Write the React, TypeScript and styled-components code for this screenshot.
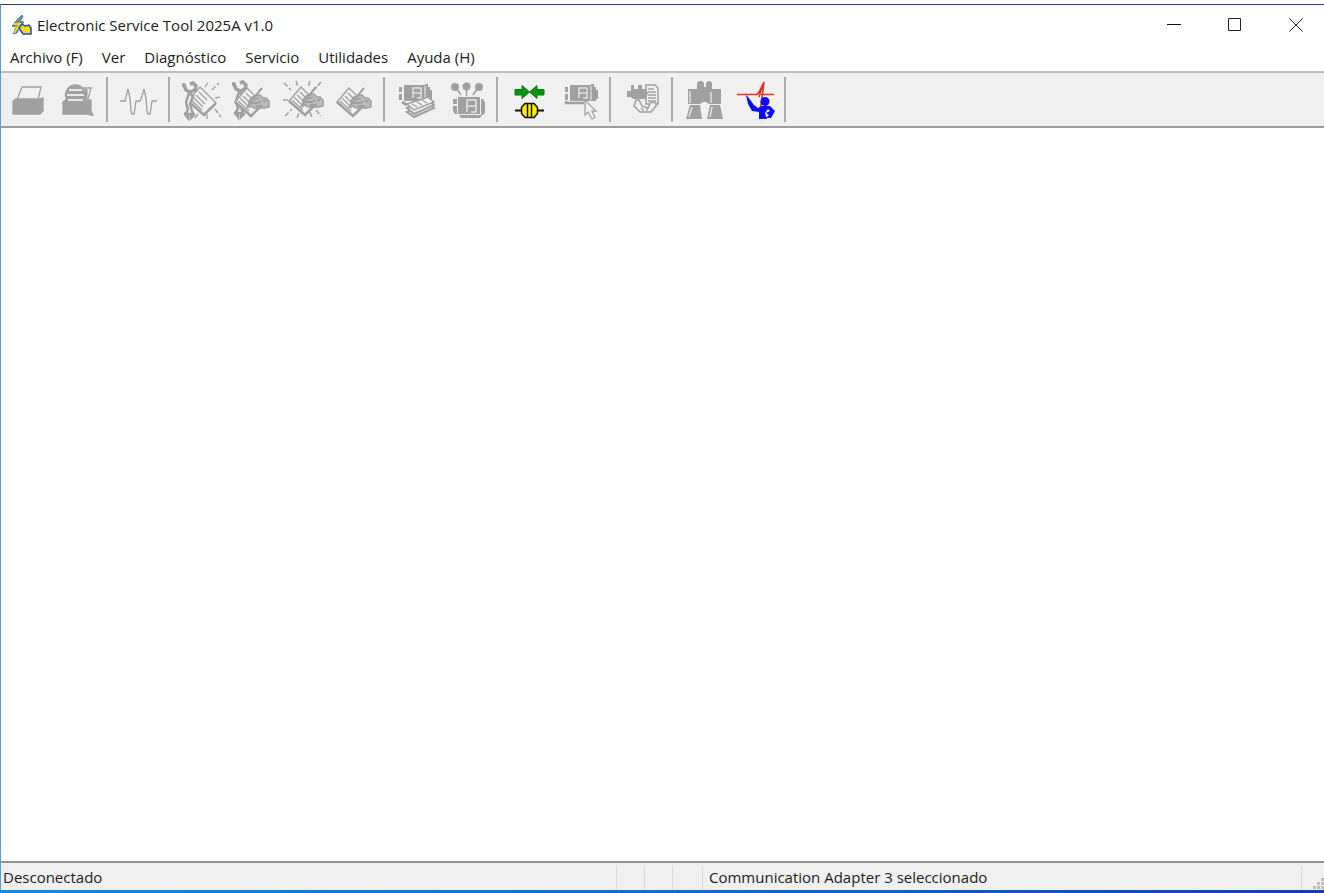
import React from 'react';
import styled, { createGlobalStyle } from 'styled-components';

const GlobalStyle = createGlobalStyle`
  * { box-sizing: border-box; }
  body { margin: 0; background: #fff; }
  button { font: inherit; color: inherit; border: 0; background: none; padding: 0; }
`;

const GRAY = '#a0a0a0';
const FACE = '#f0f0f0';

const Window = styled.div`
  display: flex;
  flex-direction: column;
  min-height: 100vh;
  padding-top: 4px;
  color: #1c1c1c;
  font-family: "Open Sans", "Noto Sans", sans-serif;
  font-size: 15px;
  line-height: 20px;
`;

const Frame = styled.div`
  flex: 1;
  display: flex;
  flex-direction: column;
  border-top: 1px solid #2b4068;
  border-left: 1px solid #5a9bd5;
`;

const TitleBar = styled.header`
  display: flex;
  align-items: center;
  height: 40px;
  padding-left: 10px;
`;

const Title = styled.h1`
  flex: 1;
  margin: 0 0 0 5px;
  font-size: 15px;
  font-weight: 400;
`;

const Captions = styled.div`
  display: flex;
  gap: 5px;
`;

const CaptionButton = styled.button`
  display: flex;
  align-items: center;
  justify-content: center;
  width: 56px;
  height: 40px;
`;

const MenuBar = styled.nav`
  display: flex;
  gap: 19px;
  height: 26px;
  padding: 2px 9px;
`;

const MenuButton = styled.button`
  height: 20px;
  white-space: nowrap;
`;

const ToolBar = styled.div`
  display: flex;
  align-items: center;
  height: 57px;
  padding-left: 1px;
  background: ${FACE};
  border-top: 2px solid #bdbdbd;
  border-bottom: 2px solid #9c9c9c;
`;

const ToolButton = styled.button`
  display: flex;
  align-items: center;
  justify-content: center;
  width: 51px;
  height: 53px;
  flex: none;
`;

const Separator = styled.span`
  flex: none;
  width: 2px;
  height: 45px;
  margin: 0 7px 0 2px;
  background: #acacac;
`;

const Workspace = styled.main`
  flex: 1;
  background: #fff;
`;

const StatusBar = styled.footer`
  display: grid;
  grid-template-columns: minmax(0, 615fr) 28px 28px 30px minmax(0, 599fr) 23px;
  height: 29px;
  padding: 3px 0 1px;
  background: ${FACE};
  border-top: 2px solid #929292;
`;

const Pane = styled.div`
  padding: 1px 2px;
  white-space: nowrap;
  overflow: hidden;
  & + & { border-left: 1px solid #d9d9d9; }
`;

const AdapterPane = styled(Pane)`
  padding-left: 6px;
`;

const GripPane = styled(Pane)`
  display: flex;
  align-items: flex-end;
  justify-content: flex-end;
  padding: 0;
`;

const Desktop = styled.div`
  height: 3px;
  background: linear-gradient(90deg, #1b86dc, #1562c4 65%, #0d3fae);
`;

const Glyph = ({ children }: { children: React.ReactNode }) => (
  <svg width="39" height="39" viewBox="0 0 39 39" fill="none" stroke={GRAY} strokeWidth="1.3" overflow="visible" aria-hidden="true">
    {children}
  </svg>
);

const Wrench = () => (
  <>
    <path strokeWidth="3.500" d="M-1 5H1L3 10 7 12 12 10 13 6 10 3 7 4" />
    <path fill={FACE} strokeWidth="2.500" d="M6 13 10 16 7 24 9 31 11 35 8 38 8 34H5L5 38 2 34 5 30 3 22z" />
  </>
);

const Sheet = () => (
  <>
    <path fill={FACE} d="M15 7 31 23 19 35 3 21z" />
    <path strokeWidth="2.500" d="M3 21 19 35 31 23" />
    <path d="M14 12 22 20M11 15 20 24M8 17 18 27M6 20 17 30" />
  </>
);

const WritingHand = () => (
  <>
    <path fill="#bababa" strokeWidth="1.500" d="M17 20 20 16 25 14H28L31 17H34L37 20V26L33 27H22L17 24z" />
    <path strokeWidth="2" d="M30 7 20 19 15 27" />
    <path stroke="#989898" d="M19 22H26L29 20M22 19 27 17M24 25H31M31 20H34" />
  </>
);

const Chip = () => (
  <>
    <path fill={GRAY} stroke="none" d="M8 5H29V4H32V7H34V10H36V19H34V21H8zM3 7H6V12H3zM3 14H6V20H3z" />
    <path stroke="#e0e0e0" strokeWidth="1.500" d="M25 8H17V18M17 13H25V8M21 18H25V13" />
    <path stroke="#dcdcdc" d="M29 6V20" />
  </>
);

const PrintIcon = () => (
  <Glyph>
    <path d="M9 20 14 7H33L30 20" />
    <path fill={GRAY} d="M5 21 8 19H32L35 18V31L32 34H5z" />
  </Glyph>
);

const PrintScreenIcon = () => (
  <Glyph>
    <path d="M23 8H32L29 19" />
    <path strokeWidth="3" d="M27 9v10" />
    <path fill={GRAY} d="M4 22 7 20H32V31l2 4H31L30 34H4z" />
    <circle cx="16.500" cy="15" r="10" fill={GRAY} />
    <path stroke="#e8e8e8" strokeWidth="2" d="M10 10H23M8 15H25M9 20H24" />
  </Glyph>
);

const WaveIcon = () => (
  <Glyph>
    <path d="M-1 21H4L5 17 7 9 9 18 10 31 11 34H13L14 28 15 21H19L21 16 23 9 25 18 26 31 27 34H29L30 28 31 21H36" />
  </Glyph>
);

const DiagnoseIcon = () => (
  <Glyph>
    <g transform="translate(2 0)">
      <Sheet />
    </g>
    <Wrench />
    <path strokeDasharray="5 2" d="M22 7l3-5M29 10l7-7M32 18l5-1M32 29l6 8M12 38l3-4M24 34v5" />
  </Glyph>
);

const DiagnoseWriteIcon = () => (
  <Glyph>
    <g transform="translate(-1 -1)">
      <Wrench />
    </g>
    <g transform="translate(-2 1)">
      <Sheet />
      <WritingHand />
    </g>
  </Glyph>
);

const NewNoteIcon = () => (
  <Glyph>
    <g transform="translate(1 0)">
      <Sheet />
      <WritingHand />
    </g>
    <path strokeWidth="1.500" strokeDasharray="5 2" d="M-1 3 6 10M11 1l2 6M25 1l-2 6M36 2 29 10M-2 20H3M0 36l7-7M12 38l2-5M25 32l2 6M31 30l5 6" />
  </Glyph>
);

const NoteIcon = () => (
  <Glyph>
    <g transform="translate(-2 1)">
      <Sheet />
      <WritingHand />
    </g>
  </Glyph>
);

const ChipPagesIcon = () => (
  <Glyph>
    <g transform="translate(-2 0)">
      <Chip />
    </g>
    <path strokeWidth="3" d="M4 22l5 3" />
    <path fill={FACE} strokeWidth="2" d="M9 32 31 24 36 28 16 37z" />
    <path fill={FACE} strokeWidth="2" d="M9 28 31 20 36 25 16 34z" />
    <path fill={FACE} strokeWidth="1.500" d="M9 24 30 17 36 22 16 30z" />
    <path d="M14 24l5 3M19 22l5 3M24 20l5 3" />
  </Glyph>
);

const ChipProbesIcon = () => (
  <Glyph>
    <path strokeWidth="1.500" d="M7 8l5 7M17.500 7v9M29 8l-5 7" />
    <g fill={GRAY} stroke="none">
      <circle cx="6" cy="7" r="4" />
      <circle cx="17.500" cy="6.500" r="4" />
      <circle cx="30" cy="7" r="4" />
      <path d="M9 17H31V34H9zM10 35H33L31 38H12zM32 19h2l2 3V33l-2 2h-2zM4 19H8V24H4zM4 26H8V34H6L4 31z" />
    </g>
    <path stroke="#e4e4e4" strokeWidth="1.500" d="M27 20H18V32M18 26H27V20M22 32H27V26" />
  </Glyph>
);

const ConnectIcon = () => (
  <Glyph>
    <path fill="#0a9414" stroke="#0a7a10" strokeWidth="1" d="M4 9.500h7V5.500l7.500 6.500-7.500 6.500V15H4zM33 9.500H26V5.500L18.500 12 26 18.500V15h7z" />
    <path stroke="#111" strokeWidth="2" d="M4 30.500H11M26 30.500H33" />
    <path fill="#f4ee12" stroke="#111" strokeWidth="1.500" d="M10.500 27.500 14 23.500H23L26.500 27.500V33.500L23 37.500H14L10.500 33.500z" />
    <path stroke="#111" strokeWidth="1.500" d="M16.500 23v15M20.500 23v15" />
  </Glyph>
);

const ChipPointerIcon = () => (
  <Glyph>
    <Chip />
    <path strokeWidth="2.500" d="M4 21v2H22" />
    <path fill={FACE} d="M23 20V35L26 32 30 39 33 37.500 30 31H34z" />
  </Glyph>
);

const PlugReportIcon = () => (
  <Glyph>
    <path fill={FACE} strokeWidth="1.500" d="M22 5H31L34 8V24H22z" />
    <path d="M24 9h6M24 12h8M24 15h8M24 18h8M24 21h8" />
    <path fill={GRAY} stroke="none" d="M7 5h3v4h4V5h4v4h4l2 4-2 6H9L7 17H3V11H7z" />
    <path fill={FACE} strokeWidth="1.500" d="M12 20 10 26 16 32H27L32 26V23L27 22 24 28 18 26 15 20z" />
    <path d="M17 28l3 3M23 28v3" />
  </Glyph>
);

const BinocularsIcon = () => (
  <Glyph>
    <path fill={GRAY} stroke="none" d="M11 3l2-2h3l2 2v4h2V3l2-2h2l2 2v6h9V24H23L20 22H17L14 24H2V9h9zM4 25H14L16 39H0zM24 25H34L37 39H21z" />
    <path stroke="#e8e8e8" d="M4 11v12M25 12v11M6 27 3 37M26 27 24 37" />
  </Glyph>
);

const PulseFigureIcon = () => (
  <Glyph>
    <path stroke="#e6301e" strokeWidth="1.600" d="M0 14.500H20L22 12 27 2 24 25 23 28M22 17 25 7M24 14.500H37" />
    <g fill="#0c0cf4" stroke="none">
      <circle cx="28" cy="21.500" r="4.500" />
      <path d="M9 15 11 17 17 25 21 28 25 26H33L38 31 34 38H29L32 35 29 33 33 31 31 29 28 33 30 39H22V32L15 31 11 24z" />
    </g>
  </Glyph>
);

const AppIcon = () => (
  <svg width="21" height="21" viewBox="0 0 21 21" aria-hidden="true">
    <path d="M1 11 5 6 11 0 12 2 9 6 13 7 9 12 6 18 2 19 5 12z" fill="#7d8fa0" stroke="#3a5f9c" strokeWidth=".8" />
    <path d="M2 9 9 9 3 18M4 12 8 14" fill="none" stroke="#e9dc20" strokeWidth="1.800" />
    <path d="M8 13 11 9 14 11 18 10 20 13V19H12z" fill="#f2dc12" stroke="#2447c8" strokeWidth="1.500" />
  </svg>
);

const menus = ['Archivo (F)', 'Ver', 'Diagnóstico', 'Servicio', 'Utilidades', 'Ayuda (H)'];

type Tool = { label: string; Icon: React.ComponentType };

const toolGroups: Tool[][] = [
  [{ label: 'Imprimir', Icon: PrintIcon }, { label: 'Imprimir pantalla', Icon: PrintScreenIcon }],
  [{ label: 'Gráfico', Icon: WaveIcon }],
  [
    { label: 'Nuevo diagnóstico', Icon: DiagnoseIcon },
    { label: 'Editar diagnóstico', Icon: DiagnoseWriteIcon },
    { label: 'Nueva nota', Icon: NewNoteIcon },
    { label: 'Editar nota', Icon: NoteIcon },
  ],
  [{ label: 'Configuración', Icon: ChipPagesIcon }, { label: 'Sensores', Icon: ChipProbesIcon }],
  [{ label: 'Conectar', Icon: ConnectIcon }, { label: 'Seleccionar módulo', Icon: ChipPointerIcon }],
  [{ label: 'Informe', Icon: PlugReportIcon }],
  [{ label: 'Buscar', Icon: BinocularsIcon }, { label: 'Servicio', Icon: PulseFigureIcon }],
];

export default function App() {
  return (
    <Window>
      <GlobalStyle />
      <Frame>
        <TitleBar>
          <AppIcon />
          <Title>Electronic Service Tool 2025A v1.0</Title>
          <Captions>
            <CaptionButton aria-label="Minimizar">
              <svg width="14" height="14"><path d="M0 6.500H14" stroke="#111" /></svg>
            </CaptionButton>
            <CaptionButton aria-label="Maximizar">
              <svg width="14" height="14"><path d="M.5 .5h12v12H.5z" fill="none" stroke="#222" /></svg>
            </CaptionButton>
            <CaptionButton aria-label="Cerrar">
              <svg width="14" height="14"><path d="M.5 .5 13.500 13.500M13.500 .5 .5 13.500" stroke="#222" /></svg>
            </CaptionButton>
          </Captions>
        </TitleBar>
        <MenuBar>
          {menus.map((name) => (
            <MenuButton key={name}>{name}</MenuButton>
          ))}
        </MenuBar>
        <ToolBar role="toolbar">
          {toolGroups.map((group) => (
            <React.Fragment key={group[0].label}>
              {group.map(({ label, Icon }) => (
                <ToolButton key={label} aria-label={label}>
                  <Icon />
                </ToolButton>
              ))}
              <Separator />
            </React.Fragment>
          ))}
        </ToolBar>
        <Workspace />
        <StatusBar>
          <Pane>Desconectado</Pane>
          <Pane />
          <Pane />
          <Pane />
          <AdapterPane>Communication Adapter 3 seleccionado</AdapterPane>
          <GripPane>
            <svg width="12" height="12" fill="#bdbdbd" aria-hidden="true">
              <path d="M9 1h3v3H9zM5 5h3v3H5zM9 5h3v3H9zM1 9h3v3H1zM5 9h3v3H5zM9 9h3v3H9z" />
            </svg>
          </GripPane>
        </StatusBar>
      </Frame>
      <Desktop />
    </Window>
  );
}
